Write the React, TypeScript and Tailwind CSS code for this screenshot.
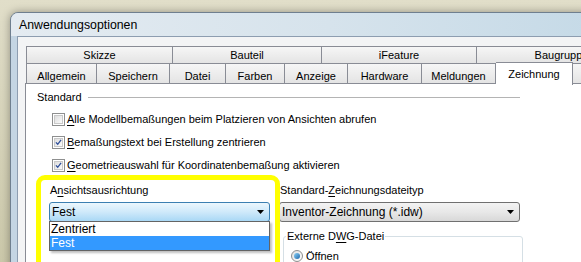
import React from "react";

const topTabs = [
  { label: "Skizze", w: 147 },
  { label: "Bauteil", w: 149 },
  { label: "iFeature", w: 155 },
  { label: "Baugruppe", w: 170 },
];

const bottomTabs = [
  { label: "Allgemein", w: 71 },
  { label: "Speichern", w: 73 },
  { label: "Datei", w: 56 },
  { label: "Farben", w: 59 },
  { label: "Anzeige", w: 63 },
  { label: "Hardware", w: 74 },
  { label: "Meldungen", w: 74 },
  { label: "Zeichnung", w: 77, active: true },
  { label: "", w: 100 },
];

function CheckBox({ checked }: { checked: boolean }) {
  return (
    <div className="w-[13px] h-[13px] border border-[#8e8f8f] bg-white p-px shrink-0">
      <div className="w-full h-full border border-[#c9c9c9] bg-gradient-to-br from-[#dedede] to-[#fbfbfb] flex items-center justify-center">
        {checked && (
          <svg width="9" height="9" viewBox="0 0 9 9">
            <path d="M1.2 4.3 L3.5 6.8 L7.8 1.2" fill="none" stroke="#2f4f9a" strokeWidth="1.7" />
          </svg>
        )}
      </div>
    </div>
  );
}

function Arrow() {
  return (
    <svg width="7" height="4" viewBox="0 0 7 4" className="shrink-0">
      <path d="M0 0 H7 L3.5 4 Z" fill="#000" />
    </svg>
  );
}

function CheckRow({ checked, k, rest }: { checked: boolean; k: string; rest: string }) {
  return (
    <div className="h-[23px] flex items-center ml-[15px]">
      <CheckBox checked={checked} />
      <span className="ml-[2px]">
        <span className="underline underline-offset-2">{k}</span>
        {rest}
      </span>
    </div>
  );
}

export default function App() {
  return (
    <div className="w-[581px] h-[262px] overflow-hidden bg-gradient-to-b from-[#e1dec9] to-[#cbc8aa] font-['Liberation_Sans',Arial,sans-serif] text-[11px] text-black">
      <div className="ml-[10px] mt-[12px] w-[640px] h-[300px] rounded-tl-[8px] border border-[#6f7f8f] bg-[#c4d5e3] shadow-[0_0_8px_rgba(0,0,0,0.35)] flex flex-col">
        {/* Title bar */}
        <div className="h-[23px] shrink-0 rounded-tl-[7px] bg-gradient-to-r from-[#e4ebf1] via-[#d6e3ec] to-[#c2d8e6] flex items-center pl-[8px]">
          <span className="text-[12.3px] text-black mt-[1px]">Anwendungsoptionen</span>
        </div>

        {/* Client area */}
        <div className="flex-1 ml-[6px] bg-[#f3f4f5] border-l border-t border-[#8d9db0] pl-[7px] pt-[9px]">
          {/* Tabs */}
          <div className="ml-[1px]">
            <div className="flex h-[17px]">
              {topTabs.map((t, i) => (
                <div
                  key={t.label}
                  style={{ width: t.w }}
                  className={`shrink-0 border-t border-r border-[#898c95] ${i === 0 ? "border-l" : ""} bg-gradient-to-b from-[#f6f6f6] to-[#e4e4e4] flex items-center justify-center`}
                >
                  {t.label}
                </div>
              ))}
            </div>
            <div className="flex h-[20px] border-t border-[#898c95]">
              {bottomTabs.map((t, i) =>
                t.active ? (
                  <div
                    key={t.label}
                    style={{ width: t.w }}
                    className="shrink-0 relative z-10 -mt-[2px] h-[23px] bg-white border-t border-r border-[#898c95] flex justify-center pt-[3px]"
                  >
                    {t.label}
                  </div>
                ) : (
                  <div
                    key={t.label + i}
                    style={{ width: t.w }}
                    className={`shrink-0 border-r border-[#898c95] ${i === 0 ? "border-l" : ""} bg-gradient-to-b from-[#f6f6f6] to-[#e4e4e4] flex justify-center pt-[4px]`}
                  >
                    {t.label}
                  </div>
                )
              )}
            </div>
          </div>

          {/* Panel */}
          <div className="h-[200px] bg-white border-l border-t border-[#898c95] pl-[11px] pt-[6px]">
            <div className="w-[483px] h-[14px] flex items-center">
              <span>Standard</span>
              <div className="flex-1 ml-[6px] h-px bg-[#b4b4b4]" />
            </div>

            <div className="mt-[4px]">
              <CheckRow checked={false} k="A" rest="lle Modellbemaßungen beim Platzieren von Ansichten abrufen" />
              <CheckRow checked k="B" rest="emaßungstext bei Erstellung zentrieren" />
              <CheckRow checked k="G" rest="eometrieauswahl für Koordinatenbemaßung aktivieren" />
            </div>

            <div className="flex mt-[6px]">
              {/* Left column */}
              <div className="relative ml-[12px] w-[221px] shrink-0">
                <div className="h-[14px] pl-[1px] flex items-center">
                  A<span className="underline underline-offset-2">n</span>sichtsausrichtung
                </div>
                <div className="mt-[5px] h-[20px] rounded-[3px] border border-[#3c7fb1] bg-gradient-to-b from-[#ecf7fd] via-[#cfe9fa] to-[#a9d8f5] flex items-center justify-between pl-[2px] pr-[5px]">
                  <span className="text-[12px]">Fest</span>
                  <Arrow />
                </div>
                <div className="mt-[9px] h-[20px] rounded-[3px] border border-[#acacac] bg-gradient-to-b from-[#f2f2f2] to-[#dedede]" />

                {/* Open dropdown list */}
                <div className="absolute left-0 top-[38px] w-[221px] border border-[#646464] bg-white shadow-[2px_2px_2px_rgba(0,0,0,0.25)] text-[12px] z-10">
                  <div className="h-[14px] pl-px flex items-center">Zentriert</div>
                  <div className="h-[14px] pl-px flex items-center bg-[#3399ff] text-white">Fest</div>
                </div>

                {/* Yellow highlight */}
                <div className="absolute -left-[13px] -top-[8px] w-[244px] h-[120px] rounded-[9px] border-[5px] border-[#ffff00] z-20 pointer-events-none" />
              </div>

              {/* Right column */}
              <div className="ml-[9px] w-[241px] shrink-0">
                <div className="h-[14px] pl-[1px] flex items-center">
                  Standard-<span className="underline underline-offset-2">Z</span>eichnungsdateityp
                </div>
                <div className="mt-[5px] h-[20px] rounded-[3px] border border-[#707070] bg-gradient-to-b from-[#f3f3f3] via-[#e8e8e8] to-[#d8d8d8] flex items-center justify-between pl-[2px] pr-[5px]">
                  <span className="text-[12px]">Inventor-Zeichnung (*.idw)</span>
                  <Arrow />
                </div>
                <fieldset className="ml-[4px] mt-[7px] w-[240px] h-[60px] rounded-[3px] border border-[#d5dfe5] px-[7px]">
                  <legend className="px-[1px] -ml-[5px] leading-[14px]">
                    Externe D<span className="underline underline-offset-2">W</span>G-Datei
                  </legend>
                  <div className="flex items-center h-[14px] mt-[6px]">
                    <div className="w-[12px] h-[12px] rounded-full border border-[#8e8f8f] bg-gradient-to-br from-[#e0e0e0] to-[#ffffff] flex items-center justify-center">
                      <div className="w-[6px] h-[6px] rounded-full bg-gradient-to-br from-[#8ad2f7] to-[#1d67a9]" />
                    </div>
                    <span className="ml-[3px]">Öffnen</span>
                  </div>
                </fieldset>
              </div>
            </div>
          </div>
        </div>
      </div>
    </div>
  );
}
